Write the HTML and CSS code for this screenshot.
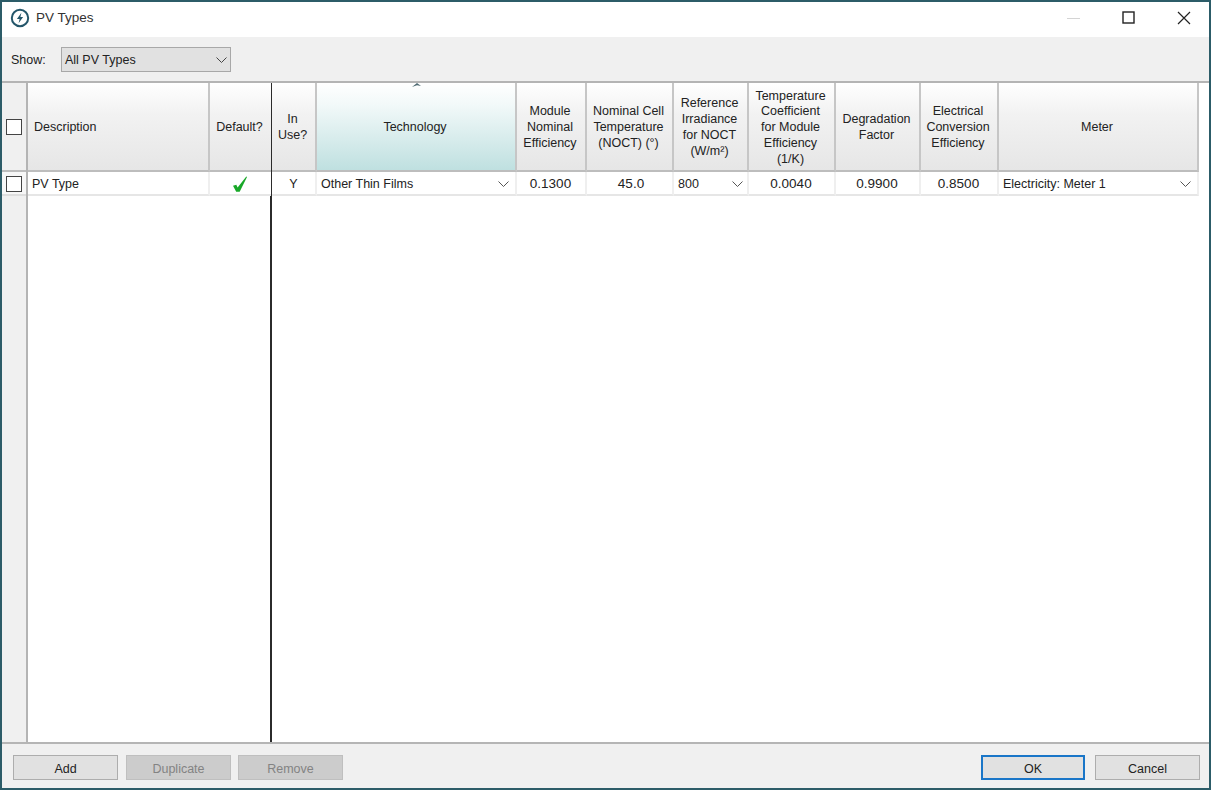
FILE: index.html
```html
<!DOCTYPE html>
<html lang="en">
<head>
<meta charset="utf-8">
<title>PV Types</title>
<link rel="stylesheet" href="styles.css">
</head>
<body>
<div class="window">
  <header class="titlebar">
    <svg class="app-icon" width="20" height="20" viewBox="0 0 20 20"><circle cx="10" cy="10" r="8.2" fill="none" stroke="#24566a" stroke-width="2"/><path d="M11.4 4.800 6.900 10.900h2.700l-1 4.300 4.500-6.200h-2.700z" fill="#24566a"/></svg>
    <span class="title">PV Types</span>
    <div class="winctl">
      <svg width="14" height="14" viewBox="0 0 14 14"><path d="M0 7.500h13" stroke="#d4d4d4" stroke-width="1"/></svg>
      <svg width="14" height="14" viewBox="0 0 14 14"><rect x="1" y="1" width="11" height="11" fill="none" stroke="#222" stroke-width="1.400"/></svg>
      <svg width="14" height="14" viewBox="0 0 14 14"><path d="M1 1l12 12M13 1 1 13" stroke="#222" stroke-width="1.200"/></svg>
    </div>
  </header>
  <div class="toolbar">
    <span class="show-label">Show:</span>
    <div class="select">
      <span>All PV Types</span>
      <svg width="11" height="6" viewBox="0 0 11 6"><path d="M.5.500l5 5 5-5" fill="none" stroke="#444" stroke-width="1"/></svg>
    </div>
  </div>
  <main class="grid">
    <section class="frozen">
      <div class="gutter">
        <div class="gutter-head"><span class="check"></span></div>
        <div class="gutter-row"><span class="check"></span></div>
      </div>
      <div class="frozen-cols">
        <div class="head-row">
          <div class="th th-left w-desc">Description</div>
          <div class="th w-def">Default?</div>
        </div>
        <div class="data-row">
          <div class="td td-left w-desc">PV Type</div>
          <div class="td check-cell w-def">
            <svg width="16" height="16" viewBox="0 0 16 16"><path d="M1 9.800 4.300 8.800l1.300 2.700L14.300.500l.7.500-7.300 14.800H4.200z" fill="#18a828"/></svg>
          </div>
        </div>
      </div>
    </section>
    <section class="scroll">
      <div class="head-row">
        <div class="th w-use">In<br>Use?</div>
        <div class="th sorted w-tech">
          <svg class="sort" width="9" height="4" viewBox="0 0 9 4"><path d="M0 4 5 0l4 3-4-.800z" fill="#4f6a72"/></svg>
          Technology
        </div>
        <div class="th w-mod">Module<br>Nominal<br>Efficiency</div>
        <div class="th w-noct">Nominal Cell<br>Temperature<br>(NOCT) (°)</div>
        <div class="th w-ref">Reference<br>Irradiance<br>for NOCT<br>(W/m²)</div>
        <div class="th w-temp">Temperature<br>Coefficient<br>for Module<br>Efficiency<br>(1/K)</div>
        <div class="th w-deg">Degradation<br>Factor</div>
        <div class="th w-elec">Electrical<br>Conversion<br>Efficiency</div>
        <div class="th w-meter">Meter</div>
      </div>
      <div class="data-row">
        <div class="td w-use">Y</div>
        <div class="td td-combo w-tech"><span>Other Thin Films</span><svg width="11" height="6" viewBox="0 0 11 6"><path d="M.5.500l5 5 5-5" fill="none" stroke="#555" stroke-width="1"/></svg></div>
        <div class="td num w-mod">0.1300</div>
        <div class="td num w-noct">45.0</div>
        <div class="td td-combo w-ref"><span>800</span><svg width="11" height="6" viewBox="0 0 11 6"><path d="M.5.500l5 5 5-5" fill="none" stroke="#555" stroke-width="1"/></svg></div>
        <div class="td num w-temp">0.0040</div>
        <div class="td num w-deg">0.9900</div>
        <div class="td num w-elec">0.8500</div>
        <div class="td td-combo w-meter"><span>Electricity: Meter 1</span><svg width="11" height="6" viewBox="0 0 11 6"><path d="M.5.500l5 5 5-5" fill="none" stroke="#555" stroke-width="1"/></svg></div>
      </div>
    </section>
  </main>
  <footer class="footer">
    <button class="btn">Add</button>
    <button class="btn off">Duplicate</button>
    <button class="btn off">Remove</button>
    <span class="spacer"></span>
    <button class="btn primary">OK</button>
    <button class="btn">Cancel</button>
  </footer>
</div>
</body>
</html>
```
FILE: styles.css
```css
* { box-sizing: border-box; }
html, body { margin: 0; height: 100%; }
body {
  font-family: "Liberation Sans", Arial, sans-serif;
  font-size: 12.5px;
  color: #222;
  overflow: hidden;
}
.window {
  width: 1211px;
  height: 790px;
  border: 2px solid #2c5c68;
  display: flex;
  flex-direction: column;
  background: #f0f0f0;
}
.titlebar {
  height: 35px;
  flex: none;
  background: #fff;
  display: flex;
  align-items: center;
  padding: 0 0 4px 8px;
}
.app-icon { flex: none; }
.title { margin-left: 6px; font-size: 13.5px; color: #333; }
.winctl {
  margin-left: auto;
  display: flex;
  gap: 41px;
  padding-right: 18px;
}
.toolbar {
  height: 44px;
  flex: none;
  display: flex;
  align-items: center;
  padding: 1px 0 0 9px;
}
.show-label { width: 50px; }
.select {
  width: 170px;
  height: 25px;
  background: #e1e1e1;
  border: 1px solid #a8a8a8;
  display: flex;
  align-items: center;
  justify-content: space-between;
  padding: 0 3px 0 3px;
}
.grid {
  flex: 1;
  display: flex;
  min-height: 0;
  background: #fff;
  border-top: 2px solid #b4b4b4;
  border-bottom: 2px solid #b5b5b5;
}
.frozen {
  width: 270px;
  flex: none;
  display: flex;
  border-right: 2px solid #2b2b2b;
}
.gutter {
  width: 26px;
  flex: none;
  background: #f0f0f0;
  border-right: 2px solid #b4b4b4;
}
.gutter-head {
  height: 89px;
  display: flex;
  align-items: center;
  justify-content: center;
  border-bottom: 2px solid #bdbdbd;
  padding-right: 1px;
}
.gutter-row {
  height: 24px;
  display: flex;
  align-items: center;
  justify-content: center;
  background: #f7f7f7;
  border-bottom: 2px solid #dedede;
  padding: 1px 1px 0 0;
}
.check {
  width: 16px;
  height: 16px;
  background: #fff;
  border: 1px solid #444;
}
.frozen-cols { flex: 1; min-width: 0; }
.scroll { flex: 1; min-width: 0; }
.head-row { display: flex; height: 89px; }
.data-row { display: flex; height: 24px; }
.th {
  flex: none;
  display: flex;
  align-items: center;
  justify-content: center;
  text-align: center;
  line-height: 15.8px;
  padding: 3px 2px 0 0;
  position: relative;
  background: linear-gradient(#fff, #f2f2f2 35%, #e6e6e6);
  border-right: 2px solid #c6c6c6;
  border-bottom: 2px solid #bdbdbd;
}
.th-left { justify-content: flex-start; padding-left: 6px; }
.th.sorted {
  background: linear-gradient(#fff, #f2f9f9 25%, #bfe0e0);
}
.sort { position: absolute; top: 0; left: 95px; }
.td {
  flex: none;
  display: flex;
  align-items: center;
  justify-content: center;
  padding-top: 1px;
  background: #fff;
  border-right: 2px solid #efefef;
  border-bottom: 2px solid #e6e6e6;
}
.num { font-size: 13.5px; padding-right: 1px; }
.num.w-noct { padding-left: 3px; padding-right: 0; }
.check-cell { padding-right: 2px; }
.td-left { justify-content: flex-start; padding-left: 4px; }
.td-combo { justify-content: space-between; padding: 1px 6px 0 4px; }
.td-combo.w-ref { padding-right: 4px; }
.w-desc { width: 182px; }
.w-def { width: 61px; border-right: 0; }
.w-use { width: 45px; }
.w-tech { width: 200px; }
.w-mod { width: 70px; }
.w-noct { width: 87px; }
.w-ref { width: 75px; }
.w-temp { width: 87px; }
.w-deg { width: 85px; }
.w-elec { width: 78px; }
.w-meter { width: 200px; }
.footer {
  height: 44px;
  flex: none;
  display: flex;
  align-items: flex-start;
  gap: 8px;
  padding: 11px 9px 0 11px;
}
.spacer { flex: 1; }
.btn {
  width: 105px;
  height: 25px;
  font: inherit;
  font-size: 12.5px;
  color: #222;
  background: #e1e1e1;
  border: 1px solid #adadad;
  padding: 2px 0 0;
}
.btn.off {
  background: #cccccc;
  border-color: #bfbfbf;
  color: #838383;
}
.btn.off + .btn.off { margin-left: -1px; }
.btn.primary {
  width: 104px;
  border: 2px solid #1a76c8;
  margin-right: 2px;
}
```
